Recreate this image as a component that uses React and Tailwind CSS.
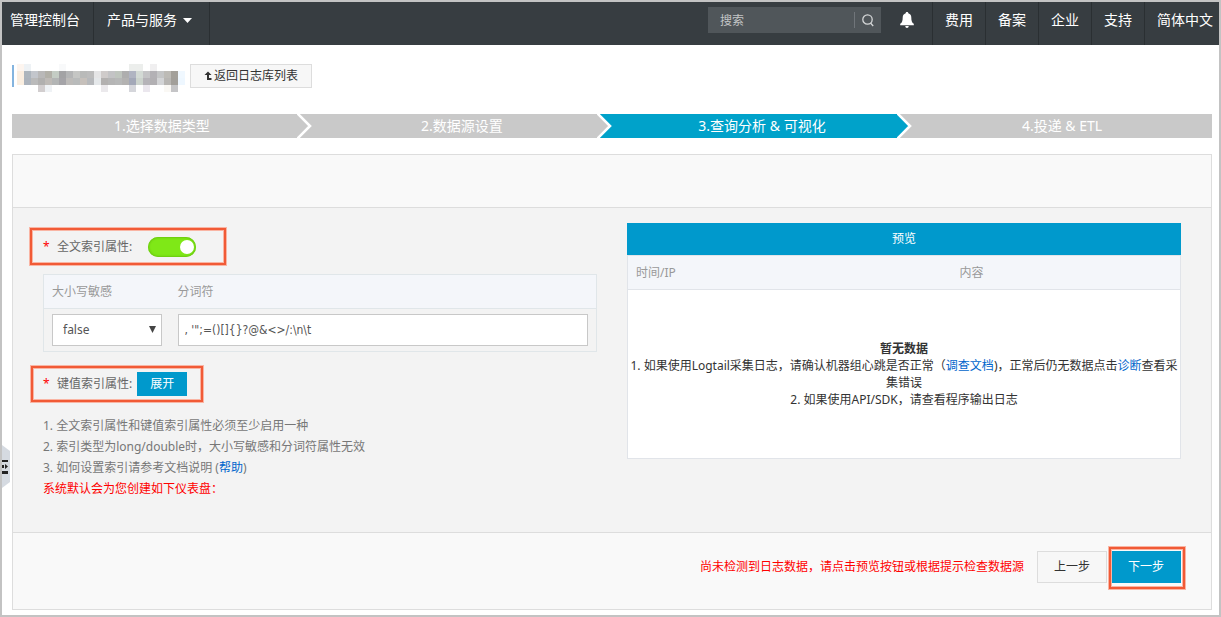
import { useState } from "react";

const navItems = ["费用", "备案", "企业", "支持"];

const steps = [
  { label: "1.选择数据类型" },
  { label: "2.数据源设置" },
  { label: "3.查询分析 & 可视化", active: true },
  { label: "4.投递 & ETL" },
];

// masked project name, one array per row of 7px blocks
const maskRows = [
  ["#fdf5ef", "#eef2f5", "", "", "", "", "#f8f9fa", "", "", "", "", "", "", "", "", "", "#eceeec", "#eceeec", "", "#f0eff0", "", "", "", ""],
  ["#fbeee0", "#adb5bd", "#c3c6cc", "#b9b8b8", "#b2b0a8", "#c4ccc4", "#a3a3a5", "#b4b5b6", "#c5c6c4", "#b9bab9", "#bcbcbc", "#e5e5e6", "#cfcbca", "#c3c3c5", "#bfc5be", "#aeaeae", "#b0b4c2", "#d3dad5", "#c4c4c6", "#b3b1b5", "#c4c5c6", "#bdbbb6", "#a3a09a", "#f0f8ff"],
  ["#faeee0", "#acb3bc", "#bababa", "#b1b0af", "#bebab6", "#b3b5b5", "#a5a4a8", "#bdbbb9", "#b9bbbb", "#c6c0bb", "#b7b9bc", "#e5e8ea", "#b3b1b0", "#b5b5b5", "#b7b8b8", "#b3b2b1", "#a3a8b8", "#ccd3cd", "#b5b3b8", "#b2b0b3", "#d3d4d6", "#b8b6b3", "#a29f9a", "#eef7ff"],
  ["", "", "", "#d2cecf", "#eff2f5", "", "", "", "", "", "", "", "#ebe9ec", "", "", "", "#d5d6db", "", "#ebe7ee", "", "", "#faf8f4", "#c5c5c7", ""],
];

const Header = () => (
  <header className="flex justify-between h-[43px] bg-[#373d41] text-white text-[14px] leading-[36px]">
    <nav className="flex">
      <a href="#" className="pl-2 pr-[13px] border-r border-[#2a2f32]">
        管理控制台
      </a>
      <a href="#" className="flex pl-[13px] pr-[17px] border-r border-[#2a2f32]">
        产品与服务
        <svg viewBox="0 0 9 5" className="w-[9px] h-[5px] ml-[6px] mt-4">
          <path d="M0 0h9L4.500 5z" fill="currentColor" />
        </svg>
      </a>
    </nav>
    <div className="flex">
      <form className="flex items-center w-[173px] h-[26px] mt-[5px] bg-[#50565a]">
        <input
          aria-label="搜索"
          placeholder="搜索"
          className="flex-1 min-w-0 h-full pl-3 text-[12px] outline-none placeholder:text-[#c3c5c6]"
        />
        <button
          type="button"
          aria-label="搜索"
          className="flex items-center justify-center w-[27px] h-4 border-l border-[#70757a]"
        >
          <svg viewBox="0 0 12 13" className="w-3 h-[13px]" fill="none" stroke="#d5d7d8" strokeWidth="1.300">
            <circle cx="5.500" cy="5.500" r="4.700" />
            <path d="M8.500 9l2.700 3" />
          </svg>
        </button>
      </form>
      <button type="button" aria-label="消息" className="flex justify-center w-[51px] pt-[10px]">
        <svg viewBox="0 0 14 16" className="w-[14px] h-4" fill="white">
          <path d="M7 0c.8 0 1.300.5 1.300 1.300C10.300 1.900 11.300 3.500 11.300 5.500c0 3.500.7 5.300 2.500 6.300v1.500H.2v-1.500C2 10.800 2.700 9 2.700 5.500c0-2 1-3.600 3-4.200C5.700.5 6.200 0 7 0zM5.300 14h3.400c0 1.200-.7 2-1.700 2s-1.700-.8-1.700-2z" />
        </svg>
      </button>
      <nav className="flex">
        {navItems.map((item) => (
          <a key={item} href="#" className="px-3 border-l border-[#2a2f32]">
            {item}
          </a>
        ))}
        <a href="#" className="pl-3 pr-[6px] border-l border-[#2a2f32]">
          简体中文
        </a>
      </nav>
    </div>
  </header>
);

const Steps = () => (
  <ol className="flex mt-[22px] h-6 text-white text-[14px] leading-6">
    {steps.map((step, index) => {
      const next = steps[index + 1];
      return (
        <li
          key={step.label}
          className={`flex flex-1 pl-[15px] ${step.active ? "bg-[#00a2ca]" : "bg-[#c9c9c9]"}`}
        >
          <span className="flex-1 text-center">{step.label}</span>
          <svg viewBox="0 0 15 24" className="w-[15px] h-6">
            {next && (
              <>
                <path d="M2 0h13v24H2l11-12z" fill={next.active ? "#00a2ca" : "#c9c9c9"} />
                <path d="M0 -1l13 13L0 25" fill="none" stroke="white" strokeWidth="2.600" />
              </>
            )}
          </svg>
        </li>
      );
    })}
  </ol>
);

const IndexSettings = () => {
  const [fullText, setFullText] = useState(true);
  const [token, setToken] = useState(", '\";=()[]{}?@&<>/:\\n\\t");

  return (
    <section className="flex-1 min-w-0 pt-5 text-[#666]">
      <div className="flex items-center w-[196px] h-[37px] -ml-[13px] pl-[11px] border-2 border-[#f15a36] shadow-[0_0_0_1px_#f9b5a4,inset_0_0_0_1px_#f9b5a4]">
        <span className="w-[14px] text-[#f00]">*</span>
        <label htmlFor="full-text">全文索引属性:</label>
        <input
          id="full-text"
          type="checkbox"
          role="switch"
          checked={fullText}
          onChange={(e) => setFullText(e.target.checked)}
          className="appearance-none flex items-center w-12 h-5 ml-4 px-[2px] rounded-full bg-[#ccc] checked:bg-[#7fe817] checked:justify-end shadow-[inset_0_0_2px_1px_#6ac810] before:block before:size-[14px] before:rounded-full before:bg-white"
        />
      </div>

      <table className="w-full mt-[9px] table-fixed border border-[#e0e6e9] text-left">
        <thead>
          <tr className="h-[34px] bg-[#f4f6fa] text-[#999] border-b border-[#e0e6e9]">
            <th className="w-[126px] px-2 font-normal">大小写敏感</th>
            <th className="px-2 font-normal">分词符</th>
          </tr>
        </thead>
        <tbody>
          <tr className="h-[43px]">
            <td className="px-2">
              <div className="relative">
                <select
                  aria-label="大小写敏感"
                  className="block appearance-none w-full h-8 px-[10px] bg-white border border-[#c8c8c8] text-[#555]"
                >
                  <option>false</option>
                  <option>true</option>
                </select>
                <svg viewBox="0 0 7 7" className="absolute right-[6px] top-3 w-[7px] h-[7px] pointer-events-none">
                  <path d="M0 0h7L3.500 7z" fill="#444" />
                </svg>
              </div>
            </td>
            <td className="px-2">
              <input
                aria-label="分词符"
                value={token}
                onChange={(e) => setToken(e.target.value)}
                className="block w-full h-8 px-[6px] bg-white border border-[#c8c8c8] text-[#555] font-['DejaVu_Sans_Condensed','Noto_Sans',sans-serif]"
              />
            </td>
          </tr>
        </tbody>
      </table>

      <div className="flex items-center w-[172px] h-9 mt-[14px] -ml-3 pl-[10px] border-2 border-[#f15a36] shadow-[0_0_0_1px_#f9b5a4,inset_0_0_0_1px_#f9b5a4]">
        <span className="w-[14px] text-[#f00]">*</span>
        <span>键值索引属性:</span>
        <button type="button" className="w-[50px] h-6 ml-[5px] bg-[#09c] text-white">
          展开
        </button>
      </div>

      <div className="mt-[13px] leading-[21px] text-[#777]">
        <p>1. 全文索引属性和键值索引属性必须至少启用一种</p>
        <p>2. 索引类型为long/double时，大小写敏感和分词符属性无效</p>
        <p>
          3. 如何设置索引请参考文档说明 (
          <a href="#" className="text-[#06c]">
            帮助
          </a>
          )
        </p>
        <p className="text-[#f00]">系统默认会为您创建如下仪表盘：</p>
      </div>
    </section>
  );
};

const Preview = () => (
  <section className="flex-1 min-w-0 pt-[15px]">
    <button type="button" className="block w-full h-8 bg-[#09c] text-white">
      预览
    </button>
    <table className="w-full table-fixed border border-[#e1e4e9] text-left">
      <thead>
        <tr className="h-[34px] bg-[#f4f6fa] text-[#999] border-b border-[#e1e4e9]">
          <th className="w-[324px] px-2 font-normal">时间/IP</th>
          <th className="px-2 font-normal">内容</th>
        </tr>
      </thead>
      <tbody>
        <tr className="h-[169px] bg-white text-[#333] text-center leading-[17px]">
          <td colSpan={2}>
            <p className="font-bold">暂无数据</p>
            <p>
              1. 如果使用Logtail采集日志，请确认机器组心跳是否正常（
              <a href="#" className="text-[#06c]">
                调查文档
              </a>
              )，正常后仍无数据点击
              <a href="#" className="text-[#06c]">
                诊断
              </a>
              查看采集错误
            </p>
            <p>2. 如果使用API/SDK，请查看程序输出日志</p>
          </td>
        </tr>
      </tbody>
    </table>
  </section>
);

export default function App() {
  return (
    <div className="relative min-h-screen border-2 border-[#c3c3c3] bg-white text-[12px] leading-[18px] font-['Noto_Sans','Noto_Sans_CJK_SC',sans-serif]">
      <Header />

      <button type="button" aria-label="展开菜单" className="absolute left-0 top-[443px]">
        <svg viewBox="0 0 8 43" className="w-2 h-[43px]">
          <path d="M0 0l8 6v31l-8 6z" fill="#d5dae1" />
          <path d="M0 15h6v2H0zM0 26h6v3H0zM0 20h2v3H0zM3 19l3 2.500L3 24z" fill="#222" />
        </svg>
      </button>

      <main className="pl-[10px] pr-[7px] pt-[19px] pb-1">
        <div className="flex items-start">
          <div className="w-[2px] h-[22px] mt-[1px] bg-[#84b4df]" />
          <svg viewBox="0 0 168 28" className="w-[168px] h-7 ml-[3px]" shapeRendering="crispEdges">
            {maskRows.map((row, y) =>
              row.map(
                (color, x) =>
                  color && <rect key={`${x}-${y}`} x={x * 7} y={y * 7} width="7" height="7" fill={color} />
              )
            )}
          </svg>
          <button
            type="button"
            className="flex items-center justify-center w-[122px] h-6 ml-[5px] bg-[#f7f7f7] border border-[#ddd] text-[#333]"
          >
            <svg viewBox="0 0 9 10" className="w-[9px] h-[10px] mr-[1px]" fill="#333">
              <path d="M4 0.500L7.500 4H5v3h2.500v2H3V4H.5z" />
            </svg>
            返回日志库列表
          </button>
        </div>

        <Steps />

        <div className="mt-4 border border-[#ddd] bg-[#f9f9f9]">
          <div className="h-[52px]" />
          <div className="flex gap-[30px] px-[30px] h-[326px] bg-[#f3f3f3] border-y border-[#ddd]">
            <IndexSettings />
            <Preview />
          </div>
          <div className="flex items-center justify-end h-[76px] pr-[30px] pb-2">
            <p className="mr-[13px] text-[#f00]">尚未检测到日志数据，请点击预览按钮或根据提示检查数据源</p>
            <button type="button" className="w-[70px] h-8 mr-1 bg-[#f7f7f7] border border-[#ddd] text-[#333]">
              上一步
            </button>
            <div className="relative">
              <button type="button" className="block w-[70px] h-8 bg-[#09c] text-white">
                下一步
              </button>
              <span className="absolute -top-1 -bottom-[6px] -left-[2px] -right-1 border-2 border-[#f15a36] shadow-[0_0_0_1px_#f9b5a4,inset_0_0_0_1px_#f9b5a4] pointer-events-none" />
            </div>
          </div>
        </div>
      </main>
    </div>
  );
}
